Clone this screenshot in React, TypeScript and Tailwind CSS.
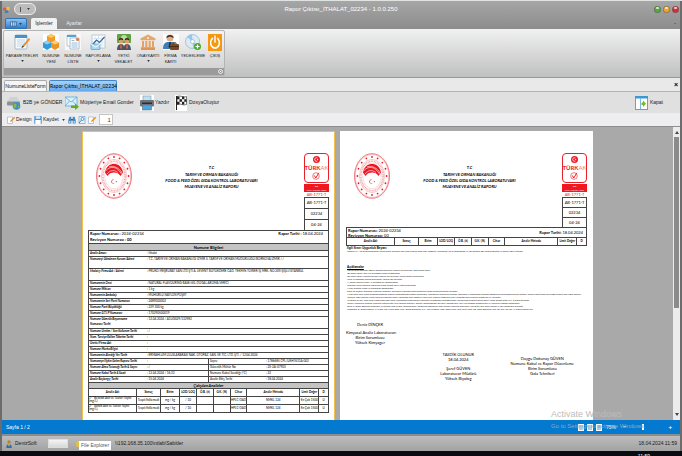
import type { ReactNode } from 'react';

type Item = { label: string; width: string; menu?: boolean; icon: ReactNode };

const RIBBON: Item[] = [
  { label: 'PARAMETRELER', width: 'w-[36px]', menu: true, icon: <NotepadIcon /> },
  { label: 'NUMUNE YENİ', width: 'w-[22px]', icon: <CubesIcon /> },
  { label: 'NUMUNE LİSTE', width: 'w-[22px]', icon: <ListIcon /> },
  { label: 'RAPORLAMA', width: 'w-[28px]', menu: true, icon: <ChartIcon /> },
  { label: 'YETKİ VEKALET', width: 'w-[23px]', icon: <PeopleIcon /> },
  { label: 'ONAYKARTI', width: 'w-[26px]', menu: true, icon: <BankIcon /> },
  { label: 'FİRMA KARTI', width: 'w-[19px]', icon: <FirmIcon /> },
  { label: 'YEDEKLEME', width: 'w-[26px]', icon: <DiscIcon /> },
  { label: 'ÇIKIŞ', width: 'w-[18px]', icon: <PowerIcon /> },
];

const INFO_ROWS: { label: string; value: string; tall?: boolean }[] = [
  { label: 'Analiz Amacı', value: ': İthalat' },
  { label: 'Numuneyi Gönderen Kurum/Adresi', value: ': T.C. TARIM VE ORMAN BAKANLIĞI İZMİR İL TARIM VE ORMAN MÜDÜRLÜĞÜ/BORNOVA İZMİR / /', tall: true },
  { label: 'İthalatçı Firma Adı / Adresi', value: ': FRUKO MEŞRUBAT SAN LTD ŞTİ A. LEVENT BÜYÜKDERE CAD. TEKFEN TOWER İŞ MRK. NO:209/ŞİŞLİ/İSTANBUL', tall: true },
  { label: 'Numunenin Cinsi', value: ': NATURAL FLAVOURING BASE/6G, DOĞAL AROMA VERİCİ' },
  { label: 'Numune Miktarı', value: ': 1 kg' },
  { label: 'Numunenin Ambalajı', value: ': MÜHÜRLÜ NAYLON POŞET' },
  { label: 'Numunenin Seri Parti Numarası', value: ': 2489000002' },
  { label: 'Numune Parti Büyüklüğü', value: ': 229 300 kg' },
  { label: 'Numune G.T.İ.P Numarası', value: ': 170290500019' },
  { label: 'Numune Gümrük Beyanname Numarası/Tarihi', value: ': 12.04.2024 / A1UGS29/132983', tall: true },
  { label: 'Numune Üretim / Son Kullanım Tarihi', value: ': /' },
  { label: 'Num. Tavsiye Edilen Tüketim Tarihi', value: ':' },
  { label: 'Üretici Firma Adı', value: ':' },
  { label: 'Numune Marka Bilgisi', value: ':' },
  { label: 'Numunenin Alındığı Yer/Tarih', value: ': ERMAHLUM ULUSLARARASI NAK. OTOPAZ. SAN. VE TİC. LTD. ŞTİ. / 12.04.2024' },
];

const SPLIT_ROWS = [
  ['Numuneye İlişkin Gelen Raporu Tarihi', ':', 'Sayısı', ': 1786685 CPL/UEH7631A-002'],
  ['Numune Alma Tutanağı Tarih & Sayısı', ': /', 'Güvenlik Mühür No', ': 2S-2A-07903'],
  ['Numune Kabul Tarih & Saati', ': 12.04.2024 / 16:33', 'Numune Kabul Sıcaklığı (°C)', ': 22'],
  ['Analiz Başlangıç Tarihi', ': 15.04.2024', 'Analiz Bitiş Tarihi', ': 18.04.2024'],
];

const ANALYSIS_HEAD = ['Analiz Adı', 'Sonuç', 'Birim', 'LOD/LOQ', 'Ö.B. (±)', 'G.K. (%)', 'Cihaz', 'Analiz Metodu', 'Limit Değer', 'D'];

const ANALYSES = [
  ['1- *Benzoik Asit ve Tuzları Tayini (mg/L)', 'Tespit Edilemedi', 'mg / kg', '/ 10', '', '', 'HPLC-DAD', 'NMKL 124', 'En Çok 1500', 'U'],
  ['2- *Sorbik Asit ve Tuzları Tayini (mg/L)', 'Tespit Edilemedi', 'mg / kg', '/ 10', '', '', 'HPLC-DAD', 'NMKL 124', 'En Çok 1500', 'U'],
];

const NOTES = [
  'Yapılan analiz sonuçları sadece laboratuvara gelen numune için geçerlidir, ürünü temsil etmez.',
  '*Bu analiz raporu yazılı izin alınmadan kısmen çoğaltılamaz.',
  '*Bu analiz raporu yukarıda belirtilen numune için geçerlidir, reklam amaçlı kullanılamaz.',
  '*İmza ve mühürsüz raporlar geçersizdir, raporun aslı geçerlidir.',
  '*** işaretli analizler TÜRKAK akreditasyon kapsamındadır.',
  '*Raporda verilen sonuçlar numunenin teslim alındığı haliyle değerlendirilmiştir.',
  '*Analiz metotları ulusal ve uluslararası standartlardır.',
  'Ürüne ait numune analizinde kullanılan yöntemler, sonuçların uygunluğu değerlendirilirken ölçüm belirsizliği dikkate alınmıştır.',
  '*Analiz talep eden kurum tarafından sağlanan bilgilerin doğruluğundan müşteri sorumludur. Laboratuvar numunenin alınması, taşınması ve saklanması sırasında doğabilecek sonuçlardan sorumlu değildir, numune şahit olarak mevzuatta belirtilen süre kadar saklanır.',
  '*Numune kabul koşulları uygun olmayan ürünlerde analiz yapılmadan önce müşteriye bilgi verilir, analizler müşterinin onayı alındıktan sonra numune geldiği hali ile yapılmıştır.',
  '*Uygunluk beyanı, karar kuralı olarak basit kabul kuralı uygulanarak ölçüm sonucu limit değer ile doğrudan karşılaştırılmıştır; genişletilmiş belirsizlik güven düzeyi yüzde doksan beştir ve k=2 olarak alınmıştır.',
  '*Sonuç, numunenin analizde kullanılan kısmına aittir. Geri kazanım değerleri, sonuca yansıtılmamıştır. Bu rapor, laboratuvarın yazılı izni olmadan değiştirilemez ve elektronik ortamda çoğaltılamaz.',
  'Tarım ve Orman Bakanlığı tarafından yayımlanan Gıda Kontrol Laboratuvarları yönetmeliği hükümlerine göre numune sonuçları düzenlenir; limit değer Türk Gıda Kodeksi ve ilgili tebliğlerden alınmıştır.',
  'Kısaltmalar: D: Değerlendirme, U: Uygun, UD: Uygun Değil, Ö.B.: Ölçüm Belirsizliği, G.K.: Geri Kazanım, LOD: Tespit Limiti, LOQ: Tayin Limiti, TE: Tespit Edilemedi, max: En Çok, min: En Az, Değerlendirme dışı.',
];

function NotepadIcon() {
  return (
    <svg viewBox="0 0 16 16" className="h-4 w-4">
      <rect x="1" y="1" width="12" height="14" rx="1" fill="#f7f9fb" stroke="#8aa3b8" strokeWidth=".7" />
      <rect x="1" y="1" width="12" height="3" fill="#3d94cf" />
      <path d="M3 6h8M3 8h8M3 10h8M3 12h5" stroke="#9cc3de" strokeWidth=".6" />
      <path d="M15 4 8.500 11.500 7.500 14 10 12.800 16 5.500z" fill="#f08a1d" />
      <path d="M8.500 11.500 7.500 14 10 12.800z" fill="#4a3a2a" />
    </svg>
  );
}

function CubesIcon() {
  return (
    <svg viewBox="0 0 16 16" className="h-4 w-4">
      <rect width="16" height="16" fill="#fff" />
      <path d="M8 0l4 2v4.500L8 9 4 6.500V2z" fill="#f39a24" />
      <path d="M8 0l4 2-4 2-4-2z" fill="#ffc766" />
      <path d="M4 6.500l4 2v5L4 16l-4-2.500v-5z" fill="#2f9bd8" />
      <path d="M4 6.500l4 2-4 2-4-2z" fill="#8fd0f2" />
      <path d="M12 6.500l4 2v5L12 16l-4-2.500v-5z" fill="#e8962a" />
      <path d="M12 6.500l4 2-4 2-4-2z" fill="#ffd27c" />
    </svg>
  );
}

function ListIcon() {
  return (
    <svg viewBox="0 0 16 16" className="h-4 w-4">
      <rect width="16" height="16" fill="#f8f8f8" />
      <path d="M2 1h9v11H2z" fill="#fff" stroke="#9fb2c2" strokeWidth=".7" />
      <path d="M2 1h9v2H2z" fill="#5b9fce" />
      <path d="M5 4h9v11H5z" fill="#fff" stroke="#8aa3b8" strokeWidth=".7" />
      <path d="M6.500 6.500h3M6.500 9h6M6.500 11h6M6.500 13h6" stroke="#74a9d0" strokeWidth=".8" />
      <circle cx="12.500" cy="5.500" r="1.600" fill="#ea7a35" />
    </svg>
  );
}

function ChartIcon() {
  return (
    <svg viewBox="0 0 16 16" className="h-4 w-4">
      <rect x="2" y="1" width="13" height="13" fill="#fff" stroke="#a5b6c6" strokeWidth=".7" />
      <path d="M5 1v13M8.500 1v13M12 1v13M2 4.500h13M2 8h13M2 11h13" stroke="#c9d9e6" strokeWidth=".6" />
      <path d="M3 10l3.500-4 3 2.500L14.500 3" fill="none" stroke="#2b6d9e" strokeWidth="1.200" />
      <rect x="1" y="10" width="9" height="5.500" rx=".6" fill="#a9d8f3" stroke="#4d9dcb" strokeWidth=".7" />
      <path d="M1 10l4.500 3.200L10 10" fill="none" stroke="#fff" strokeWidth=".9" />
    </svg>
  );
}

function PeopleIcon() {
  return (
    <svg viewBox="0 0 16 16" className="h-4 w-4">
      <rect x="1" y="0" width="14" height="9" rx="1" fill="#5fa343" />
      <circle cx="8" cy="4" r="3" fill="#b9dba4" />
      <circle cx="5" cy="7" r="2.400" fill="#d9a06b" />
      <path d="M2.600 6.500a2.400 2.400 0 0 1 4.800 0L5 5.600z" fill="#3a241a" />
      <circle cx="11" cy="7" r="2.400" fill="#d9a06b" />
      <path d="M8.600 6.500a2.400 2.400 0 0 1 4.800 0L11 5.600z" fill="#3a241a" />
      <path d="M1 16c0-4 1.500-6 4-6s3 2 3 3c0-1 .8-3 3-3s4 2 4 6z" fill="#4b535f" />
      <path d="M4.500 10h1l.5 4-1 1-1-1zM10.500 10h1l.5 4-1 1-1-1z" fill="#d9604f" />
    </svg>
  );
}

function BankIcon() {
  return (
    <svg viewBox="0 0 16 16" className="h-4 w-4">
      <path d="M8 .5 15.500 4.500v1.700H.5V4.500z" fill="#e8a76a" />
      <path d="M2 7h2v6H2zM5.300 7h2v6h-2zM8.700 7h2v6h-2zM12 7h2v6h-2z" fill="#e6a062" />
      <path d="M1 13.200h14V16H1z" fill="#de9656" />
      <circle cx="8" cy="4" r="1" fill="#fff2e2" />
    </svg>
  );
}

function FirmIcon() {
  return (
    <svg viewBox="0 0 16 16" className="h-4 w-4">
      <rect width="16" height="16" fill="#fff" />
      <circle cx="7" cy="4" r="3.500" fill="#deb08a" />
      <path d="M3.400 4C3 0 11 0 10.600 4L7 2.500z" fill="#44291c" />
      <path d="M0 15c0-5 2-7 5-7h4c3 0 4 2 4 7z" fill="#3b7fb6" />
      <path d="M6.300 8h1.500l.7 5-1.500 1.500L5.600 13z" fill="#1c2f44" />
      <rect x="7" y="10" width="9" height="6" rx="1" fill="#7a4a26" />
      <path d="M10 10V8.800h3V10M7 12.500h9" fill="none" stroke="#3f2413" strokeWidth=".8" />
    </svg>
  );
}

function DiscIcon() {
  return (
    <svg viewBox="0 0 16 16" className="h-4 w-4">
      <circle cx="7.500" cy="7.500" r="7" fill="#dcebf5" stroke="#8fb0c8" strokeWidth=".7" />
      <path d="M7.500 7.500 2 3A7 7 0 0 1 7 .5zM7.500 7.500 13 12a7 7 0 0 1-5 2.500z" fill="#8ccaf0" />
      <circle cx="7.500" cy="7.500" r="2" fill="#fff" stroke="#8fb0c8" strokeWidth=".7" />
      <circle cx="12.500" cy="12.500" r="3.500" fill="#4cab28" />
      <path d="M12.500 10.500v4M10.500 12.500h4" stroke="#fff" strokeWidth="1.200" />
    </svg>
  );
}

function PowerIcon() {
  return (
    <svg viewBox="0 0 16 16" preserveAspectRatio="none" className="h-[17px] w-[14px]">
      <rect width="16" height="16" fill="#f7960f" />
      <path d="M5 4.200a5 5 0 1 0 6 0M8 2v5.500" fill="none" stroke="#fff" strokeWidth="1.700" strokeLinecap="round" />
    </svg>
  );
}

function ServerIcon() {
  return (
    <svg viewBox="0 0 14 14" className="h-[14px] w-[14px] shrink-0">
      <path d="M3 1h7l3 5H0z" fill="#cfd2d4" />
      <rect y="5.500" width="13" height="4" rx="1" fill="#8c9194" />
      <circle cx="9.500" cy="10" r="3.800" fill="#3c8fc9" />
      <path d="M7 8c2-1.500 3 0 2.500 1.500S8 12 7.500 12.500 6 9 7 8zM10.500 10l2-.5-1 3z" fill="#7cc04a" />
    </svg>
  );
}

function MailIcon() {
  return (
    <svg viewBox="0 0 14 14" className="h-[14px] w-[14px] shrink-0">
      <rect x="0" y="1" width="12" height="9" fill="#d9effb" stroke="#5badd8" strokeWidth=".8" />
      <path d="M0 1l6 5 6-5M0 10l4.500-5M12 10 7.500 5" fill="none" stroke="#5badd8" strokeWidth=".8" />
      <path d="M6 9.500h4V7.500l4 3.200-4 3.300v-2H6z" fill="#5cae2c" />
    </svg>
  );
}

function PrinterIcon() {
  return (
    <svg viewBox="0 0 14 16" className="h-4 w-[14px] shrink-0">
      <rect width="14" height="16" fill="#fff" />
      <rect x="3" y="1" width="8" height="5" fill="#bfe0f3" stroke="#7d98aa" strokeWidth=".6" />
      <rect x="0" y="5" width="14" height="6.500" rx="1" fill="#6c737b" />
      <rect x="2" y="7.500" width="10" height="1.500" fill="#2a2f36" />
      <rect x="2.500" y="10" width="9" height="5" fill="#4ca5dc" stroke="#60727f" strokeWidth=".6" />
    </svg>
  );
}

function FlagIcon() {
  return (
    <svg viewBox="0 0 12 16" className="h-4 w-3 shrink-0">
      <rect width="12" height="16" fill="#fff" />
      <path d="M1.500 1v14" stroke="#222" strokeWidth="1" />
      <path d="M2 1.500q2.500-1 5 0t4.500 0v8q-2.500 1-4.500 0t-5 0z" fill="#fff" stroke="#222" strokeWidth=".6" />
      <path d="M2 1.500h2.500v2.700H2zM7 1.500h2.300v2.700H7zM4.500 4.200H7v2.600H4.500zM9.300 4.200h2.200v2.600H9.300zM2 6.800h2.500v2.700H2zM7 6.800h2.300v2.700H7z" fill="#222" />
    </svg>
  );
}

function CloseDocIcon() {
  return (
    <svg viewBox="0 0 13 14" className="h-[14px] w-[13px] shrink-0">
      <rect x=".5" y=".5" width="12" height="13" fill="#fff" stroke="#5aa5d4" />
      <path d="M0 0h13v2.500H0z" fill="#3b98d6" />
      <path d="M5.500 2.500V13" stroke="#5aa5d4" strokeWidth=".8" />
      <path d="M6.500 6.500h1.500V4.500l3 3.300-3 3.300V9H6.500z" fill="#79b81f" />
    </svg>
  );
}

function EditIcon() {
  return (
    <svg viewBox="0 0 8 8" className="h-2 w-2 shrink-0">
      <path d="M.5 1h5v6.500h-5z" fill="#fff" stroke="#8ba7bd" strokeWidth=".6" />
      <path d="M7.500.5 3.500 4.500 3 6l1.500-.5L8 2z" fill="#ef8c1e" />
    </svg>
  );
}

function SaveIcon() {
  return (
    <svg viewBox="0 0 8 8" className="h-2 w-2 shrink-0">
      <rect x=".3" y="0" width="7.400" height="8" rx=".7" fill="#4b8ecb" />
      <rect x="1.700" y=".3" width="4.600" height="2.500" fill="#dcebf7" />
      <rect x="1.300" y="4" width="5.400" height="4" fill="#fff" />
    </svg>
  );
}

function BinocularsIcon() {
  return (
    <svg viewBox="0 0 8 8" className="h-2 w-2">
      <path d="M1.500.7h1.800V7.500H.3V4zM6.500.7H4.700V7.500h3V4z" fill="#4a87bd" />
      <path d="M3 3h2v1.500H3z" fill="#2a5d8c" />
      <path d="M1 5h1.500v1.700H1zM5.500 5H7v1.700H5.500z" fill="#b5d7f0" />
    </svg>
  );
}

function CopyIcon() {
  return (
    <svg viewBox="0 0 8 8" className="h-2 w-2">
      <path d="M1 .5h6v7H1z" fill="#eef6fc" stroke="#6aa3cf" strokeWidth=".7" />
      <circle cx="4.500" cy="3" r="1.500" fill="none" stroke="#3b82bd" strokeWidth=".8" />
      <path d="M3.400 4.200 1 7" stroke="#3b82bd" strokeWidth="1" />
    </svg>
  );
}

function Caret() {
  return (
    <svg viewBox="0 0 4 3" className="h-[2px] w-[3px]">
      <path d="M0 0h4L2 3z" fill="#333" />
    </svg>
  );
}

function Orb({ color }: { color: string }) {
  return (
    <svg viewBox="0 0 8 8" className="h-[7px] w-[7px]">
      <circle cx="4" cy="4" r="3.700" fill={color} stroke="#555" strokeWidth=".6" />
      <ellipse cx="4" cy="2.300" rx="2" ry="1.200" fill="#fff" opacity=".75" />
    </svg>
  );
}

function MinistryLogo() {
  const dots = Array.from({ length: 16 }, (_, i) => (i * Math.PI) / 8);
  return (
    <svg viewBox="0 0 36 46" className="h-[46px] w-9">
      <g fill="none" stroke="#e8414a">
        <ellipse cx="18" cy="23" rx="17.500" ry="22.300" strokeWidth=".7" />
        <ellipse cx="18" cy="23" rx="16.700" ry="21.400" strokeWidth=".3" />
        <ellipse cx="18" cy="23" rx="12.500" ry="16.600" strokeWidth=".3" />
        <ellipse cx="18" cy="23" rx="11" ry="14.700" strokeWidth="1.500" strokeDasharray=".9 .7" opacity=".5" />
        <ellipse cx="18" cy="23" rx="9.300" ry="12.800" strokeWidth=".2" />
      </g>
      {dots.map(a => (
        <circle key={a} cx={18 + 14.6 * Math.cos(a)} cy={23 + 19 * Math.sin(a)} r=".9" fill="#e2202b" />
      ))}
      <path d="M9 19.500C10 13.500 14 11 18 11s8 2.500 9 8.500l-2.500 3.500c-1.500-2.500-3.500-3.500-6.500-3.500s-5 1-6.500 3.500z" fill="#f01420" />
      <path d="M9.500 18c5-5.500 11-5 16 3M13 14c5-1.500 10 .5 13 6M11 21c3-4 7-4.500 11-1.500" fill="none" stroke="#fff" strokeWidth=".6" />
      <path d="M18.700 26.800a2.200 2.200 0 1 0 0 3.600 2 2 0 1 1 0-3.600z" fill="#e2202b" />
      <circle cx="20.300" cy="28.600" r=".6" fill="#e2202b" />
    </svg>
  );
}

function Accreditation() {
  return (
    <div className="flex w-full flex-col items-center whitespace-nowrap">
      <div className="flex h-[30px] w-full flex-col items-center justify-between rounded-sm border border-[#e8202a] py-[2px] text-[#e8202a]">
        <svg viewBox="0 0 8 8" className="h-[7px] w-[7px]">
          <circle cx="4" cy="4" r="4" fill="#e8202a" />
          <path d="M5 2.300a2 2 0 1 0 0 3.400" fill="none" stroke="#fff" strokeWidth=".9" />
          <circle cx="5.300" cy="4" r=".7" fill="#fff" />
        </svg>
        <span className="text-[6px] leading-[6px] font-bold">TÜRK<span className="font-normal opacity-60">AK</span></span>
        <svg viewBox="0 0 8 8" className="h-2 w-2">
          <circle cx="4" cy="4" r="3.300" fill="none" stroke="#e8202a" strokeWidth=".6" />
          <path d="M2.300 3.500 3.800 6 6.800.8" fill="none" stroke="#e8202a" strokeWidth="1" />
        </svg>
      </div>
      <div className="mt-px h-2 w-full bg-[#f01820] text-center text-[2px] leading-[4px] text-white">
        Test<br />TS EN ISO/IEC 17025
      </div>
      <div className="text-[4px] leading-[5px] text-[#e8202a]">AB-1771-T</div>
    </div>
  );
}

function PageHead({ code }: { code: string }) {
  return (
    <div className="flex items-start justify-between">
      <div className="w-11 pl-2"><MinistryLogo /></div>
      <div className="mt-3 pl-[6px] text-center text-[4px] leading-[6px] font-bold whitespace-nowrap text-black italic">
        <p className="mb-px">T.C</p>
        <p>TARIM VE ORMAN BAKANLIĞI</p>
        <p>FOOD &amp; FEED ÖZEL GIDA KONTROL LABORATUVARI</p>
        <p>MUAYENE VE ANALİZ RAPORU</p>
      </div>
      <div className="w-11">
        <div className="ml-auto w-[25px]">
          <Accreditation />
          <div className={code}>
            <p>AB-1771-T</p>
            <p>02234</p>
            <p>04-24</p>
          </div>
        </div>
      </div>
    </div>
  );
}

function AnalysisCols() {
  return (
    <colgroup>
      <col className="w-[20%]" /><col className="w-[10%]" /><col className="w-[8%]" /><col className="w-[7%]" /><col className="w-[7%]" />
      <col className="w-[7%]" /><col className="w-[7%]" /><col className="w-[22%]" /><col className="w-[8%]" /><col className="w-[4%]" />
    </colgroup>
  );
}

function PageOne() {
  return (
    <article className="w-[253px] shrink-0 border border-b-0 border-[#f2c04c] bg-white px-[5px] pt-[21px] font-[Lato,sans-serif] text-black">
      <PageHead code="divide-y divide-[#444] border border-b-0 border-[#444] text-center text-[4px] leading-[10px] whitespace-nowrap" />
      <div className="flex h-[13px] justify-between border border-b-0 border-[#444] px-px text-[4px] leading-[6px]">
        <div>
          <p><b>Rapor Numarası :</b> 2024-02234</p>
          <p><b>Revizyon Numarası : 00</b></p>
        </div>
        <p className="pr-1"><b>Rapor Tarihi :</b> 18.04.2024</p>
      </div>
      <table className="w-full table-fixed border-collapse border border-[#444] text-[3px] leading-[5px] whitespace-nowrap">
        <colgroup><col className="w-[24%]" /><col className="w-[26%]" /><col className="w-[24%]" /><col className="w-[26%]" /></colgroup>
        <tbody>
          <tr className="border border-[#444] bg-[#c4c4c4]"><th colSpan={4} className="h-[7px] p-0 text-[4px]">Numune Bilgileri</th></tr>
          {INFO_ROWS.map(r => (
            <tr key={r.label} className="border border-[#444]">
              <th scope="row" className={r.tall ? 'h-3 p-0 pl-px text-left align-top whitespace-normal italic' : 'h-[6px] p-0 pl-px text-left italic'}>{r.label}</th>
              <td colSpan={3} className="p-0 pl-px align-top">{r.value}</td>
            </tr>
          ))}
          {SPLIT_ROWS.map(([a, b, c, d]) => (
            <tr key={a} className="border border-[#444]">
              <th scope="row" className="h-[6px] p-0 pl-px text-left italic">{a}</th>
              <td className="p-0 pl-px">{b}</td>
              <td className="border-l border-[#444] p-0 pl-px">{c}</td>
              <td className="p-0">{d}</td>
            </tr>
          ))}
          <tr className="border border-[#444] bg-[#c4c4c4]"><th colSpan={4} className="h-[6px] p-0 text-[4px] italic">Çalışılan Analizler</th></tr>
        </tbody>
      </table>
      <table className="w-full table-fixed border-collapse text-center text-[3px] leading-[4px]">
        <AnalysisCols />
        <thead>
          <tr>{ANALYSIS_HEAD.map(h => <th key={h} className="h-[7px] border border-t-0 border-[#444] p-0 whitespace-nowrap">{h}</th>)}</tr>
        </thead>
        <tbody>
          {ANALYSES.map(row => (
            <tr key={row[0]}>
              {row.map((c, i) => <td key={i} className="h-2 border border-[#444] p-0 leading-[3px] first:text-left">{c}</td>)}
            </tr>
          ))}
        </tbody>
      </table>
    </article>
  );
}

function PageTwo() {
  return (
    <article className="w-[253px] shrink-0 bg-white px-[6px] pt-[22px] font-[Lato,sans-serif] text-black">
      <PageHead code="divide-y divide-[#444] border border-b-0 border-[#444] text-center text-[4px] leading-[9px] whitespace-nowrap" />
      <div className="flex h-[10px] items-center justify-between border border-b-0 border-[#444] px-px text-[4px] leading-[5px]">
        <div>
          <p><b>Rapor Numarası:</b> 2024-02234</p>
          <p><b>Revizyon Numarası:</b> 00</p>
        </div>
        <p className="pr-[2px]"><b>Rapor Tarihi:</b> 18.04.2024</p>
      </div>
      <table className="w-full table-fixed border-collapse text-center text-[3px] leading-[5px]">
        <AnalysisCols />
        <thead>
          <tr>{ANALYSIS_HEAD.map(h => <th key={h} className="h-2 border border-[#444] p-0 whitespace-nowrap">{h}</th>)}</tr>
        </thead>
      </table>
      <div className="px-px font-['Liberation_Sans',Arial,sans-serif] text-[2px] leading-[3px] whitespace-nowrap">
        <p className="text-[3px] leading-1 font-bold">İlgili Sınırı Uygunluk Beyanı</p>
        <p>KORUMALI, (AB) Değerlendirilmesi yapılan analiz sonuçları Türk Gıda Kodeksi Gıda Katkı Maddeleri Yönetmeliği (13.10.2023/32338) ve İlgili tebliğine göre değerlendirilmiş ve limitlere göre uygundur.</p>
        <p className="mt-3 text-[3px] leading-1 font-bold underline">Açıklamalar</p>
        {NOTES.map(n => <p key={n}>{n}</p>)}
      </div>
      <div className="mt-[11px] flex justify-between pr-[13px] text-center text-[4px] leading-[5px] whitespace-nowrap">
        <div className="mr-3 w-12">
          <p>Deniz DİNÇER</p>
          <p className="mt-[3px]">Kimyasal Analiz Laboratuvarı</p>
          <p>Birim Sorumlusu</p>
          <p>Yüksek Kimyager</p>
        </div>
        <div className="mt-[30px]">
          <p>TASDİK OLUNUR</p>
          <p>18.04.2024</p>
          <p className="mt-1">Şeref GÜVEN</p>
          <p>Laboratuvar Müdürü</p>
          <p>Yüksek Biyolog</p>
        </div>
        <div className="mt-[34px]">
          <p>Duygu Dokunay GÜVEN</p>
          <p>Numune Kabul ve Rapor Düzenleme</p>
          <p>Birim Sorumlusu</p>
          <p>Gıda Teknikeri</p>
        </div>
      </div>
    </article>
  );
}

export default function App() {
  return (
    <div className="relative flex h-screen flex-col overflow-hidden border-t border-t-[#dfe3e1] bg-[#8f8f8f] font-['Liberation_Sans',Arial,sans-serif] text-[5px] leading-[7px] text-[#1a1a1a]">
      <div className="flex min-h-0 flex-1 flex-col border-x-2 border-x-[#6c6c6c]">
        <header className="bg-linear-to-b from-[#a6a6a6] to-[#8c8c8c]">
          <div className="flex h-4 items-center px-px">
            <div className="flex flex-1 items-center gap-1">
              <svg viewBox="0 0 8 8" className="h-[7px] w-[7px]">
                <rect x="0" y="2" width="4" height="3" fill="#e4573c" />
                <rect x="4" y="1" width="3.500" height="4" fill="#f0c03b" />
                <rect x="2" y="5" width="4" height="3" fill="#3d7fc4" />
              </svg>
              <button className="flex h-3 w-[22px] items-center justify-center gap-[6px] rounded-full border border-[#eee] bg-[#bcbcbc]" aria-label="Hızlı erişim">
                <span className="h-[5px] w-px bg-[#555]" />
                <Caret />
              </button>
            </div>
            <h1 className="text-[6px] text-white">Rapor Çıktısı_İTHALAT_02234 - 1.0.0.250</h1>
            <div className="flex flex-1 justify-end gap-[2px]">
              <button aria-label="Küçült"><Orb color="#4fae35" /></button>
              <button aria-label="Büyüt"><Orb color="#f2a32a" /></button>
              <button aria-label="Kapat"><Orb color="#e02a35" /></button>
            </div>
          </div>
          <nav className="flex h-3 items-end gap-1 pl-[3px]">
            <button className="flex h-[11px] w-[22px] items-center justify-center gap-[2px] rounded-t-xs border border-[#2f73b5] bg-linear-to-b from-[#8ec4f2] to-[#2e7fd0]" aria-label="Uygulama menüsü">
              <svg viewBox="0 0 8 6" className="h-[6px] w-[7px]">
                <path d="M.5.5h7v5h-7zM3 .5v5M5.500.5v5" fill="#b8dcf7" stroke="#1c4d80" strokeWidth=".7" />
              </svg>
              <Caret />
            </button>
            <button className="h-[11px] w-[26px] rounded-t-xs bg-[#f1f1f1] text-center">İşlemler</button>
            <button className="h-[11px] w-[26px] text-center text-[#eee]">Ayarlar</button>
            <span className="flex-1" />
            <span className="pr-1 text-[#333]">ˆ</span>
          </nav>
        </header>

        <section className="border-b border-[#979797] bg-linear-to-b from-[#f1f1f1] to-[#bfc0c0] pt-px pb-px pl-px" aria-label="İşlemler">
          <div className="flex w-fit flex-col rounded-xs border border-[#b4b4b4] bg-linear-to-b from-[#f4f4f4] to-[#cecece]">
            <div className="flex h-[37px] items-start pt-[2px]">
              {RIBBON.map(item => (
                <button key={item.label} className={item.width + ' flex flex-col items-center text-[4px] leading-[6px]'}>
                  <span className="flex h-[18px] items-center">{item.icon}</span>
                  <span className="mt-[2px] px-[2px]">{item.label}</span>
                  {item.menu && <span className="mt-px"><Caret /></span>}
                </button>
              ))}
            </div>
            <div className="flex h-[7px] items-center justify-end bg-[#9b9b9b] pr-px">
              <button className="flex h-[5px] w-[5px] items-center justify-center rounded-full border border-[#eee]" aria-label="Grup seçenekleri">
                <span className="h-px w-px bg-white" />
              </button>
            </div>
          </div>
        </section>

        <div className="flex h-[14px] items-end border-b border-[#b5b5b5] bg-[#e9e9e9] pr-[2px] pl-[2px]">
          <button className="h-[11px] w-[43px] rounded-t-xs border border-b-0 border-[#aaa] bg-[#f5f5f5] text-center font-[Lato,sans-serif] whitespace-nowrap">NumuneListeForm</button>
          <button className="ml-[2px] h-[11px] w-[68px] rounded-t-xs border border-b-0 border-[#3f87c9] bg-linear-to-b from-[#a9d2f8] to-[#62a9ed] text-center font-[Lato,sans-serif] whitespace-nowrap text-black">Rapor Çıktısı_İTHALAT_02234</button>
          <button className="ml-auto self-center text-[7px] font-bold text-black" aria-label="Sekmeyi kapat">×</button>
        </div>

        <div className="flex h-[21px] items-center bg-[#e0e0e0] pr-[17px] pl-[5px] whitespace-nowrap">
          <button className="flex w-[58px] items-center gap-[2px]"><ServerIcon />B2B ye GÖNDER</button>
          <button className="flex w-[75px] items-center gap-px"><MailIcon />Müşteriye Email Gonder</button>
          <button className="flex w-[35px] items-center gap-px"><PrinterIcon />Yazdır</button>
          <button className="flex items-center gap-[2px]"><FlagIcon />DosyaOluştur</button>
          <button className="ml-auto flex items-center gap-[2px]"><CloseDocIcon />Kapat</button>
        </div>

        <div className="flex h-[13px] items-center gap-[2px] bg-[#eeeef0] pl-[5px] whitespace-nowrap">
          <button className="flex w-[25px] items-center gap-px"><EditIcon />Design</button>
          <button className="flex items-center gap-px"><SaveIcon />Kaydet</button>
          <button className="mx-px" aria-label="Kaydet seçenekleri"><Caret /></button>
          <button aria-label="Bul"><BinocularsIcon /></button>
          <button aria-label="Önizle"><CopyIcon /></button>
          <button aria-label="Düzenle"><EditIcon /></button>
          <input aria-label="Sayfa" defaultValue="1" className="ml-px h-[11px] w-[14px] border border-[#c5c5c5] bg-white px-px text-right" />
        </div>

        <main className="flex min-h-0 flex-1 border-t border-[#8e8e8e] bg-[#a9a9a9]">
          <div className="flex min-w-0 flex-1 justify-center gap-[5px] overflow-hidden pt-1">
            <PageOne />
            <PageTwo />
          </div>
          <div className="flex w-[7px] flex-col items-center bg-[#ececec] py-1" aria-hidden="true">
            <svg viewBox="0 0 4 3" className="h-[3px] w-1"><path d="M0 3h4L2 0z" fill="#444" /></svg>
            <div className="mt-[3px] h-3/5 w-[5px] bg-[#8b8b8b]" />
            <svg viewBox="0 0 4 3" className="mt-auto h-[3px] w-1"><path d="M0 0h4L2 3z" fill="#444" /></svg>
          </div>
        </main>

        <div className="flex h-[14px] items-center bg-[#0479d0] pr-2 pl-1 text-white">
          <span>Sayfa 1 / 2</span>
          <div className="ml-auto flex items-center gap-[3px]">
            {['Çok sayfa', 'Tek sayfa', 'Sayfa genişliği'].map(t => (
              <button key={t} aria-label={t} className="h-[7px] w-[6px] border border-white bg-[#a8cdea]" />
            ))}
            <span className="ml-px w-[10px]">75%</span>
            <button className="ml-1 text-[6px] font-bold" aria-label="Uzaklaştır">−</button>
            <input type="range" aria-label="Yakınlaştırma" defaultValue={38} className="h-[7px] w-9 appearance-none bg-transparent [&::-webkit-slider-thumb]:h-[6px] [&::-webkit-slider-thumb]:w-[2px] [&::-webkit-slider-thumb]:appearance-none [&::-webkit-slider-thumb]:bg-white" />
            <button className="text-[6px] font-bold" aria-label="Yakınlaştır">+</button>
          </div>
        </div>

        <footer className="flex h-[17px] items-center border-t-2 border-[#8c8c8c] bg-linear-to-b from-[#bdbdbd] to-[#a2a2a2] pr-[3px] pl-1 whitespace-nowrap">
          <svg viewBox="0 0 6 8" className="h-2 w-[6px]">
            <circle cx="3" cy="2" r="1.700" fill="#b9813a" />
            <path d="M.3 8c0-3 1-4 2.700-4s2.700 1 2.700 4z" fill="#2f6ca8" />
            <path d="M2.200 4h1.600L3 7z" fill="#f3d23a" />
          </svg>
          <span className="ml-[3px] w-[33px]">DenizSoft</span>
          <span className="h-[9px] w-5 border border-[#ddd] bg-linear-to-b from-[#f4f4f4] to-[#d8d8d8]" />
          <span className="ml-2 h-[6px] w-[3px] rounded-l-xs bg-[#e4c04a]" />
          <span className="mt-1 bg-white px-[2px] leading-[9px] text-[#555]">File Explorer</span>
          <span className="ml-1">\\192.168.35.100\ntlab\Sabitler</span>
          <span className="ml-auto">18.04.2024 11:59</span>
        </footer>
      </div>
      <div className="flex h-[5px] items-start justify-end overflow-hidden bg-[#080b10] pt-[2px] pr-8 text-white">11:59</div>

      <div className="pointer-events-none absolute right-[30px] bottom-[24px] w-[101px] whitespace-nowrap text-[#bcbcbc]">
        <p className="text-[9px] leading-3">Activate Windows</p>
        <p className="text-[6px] leading-3 text-[#8fa9c0]">Go to Settings to activate Windows.</p>
      </div>
    </div>
  );
}
